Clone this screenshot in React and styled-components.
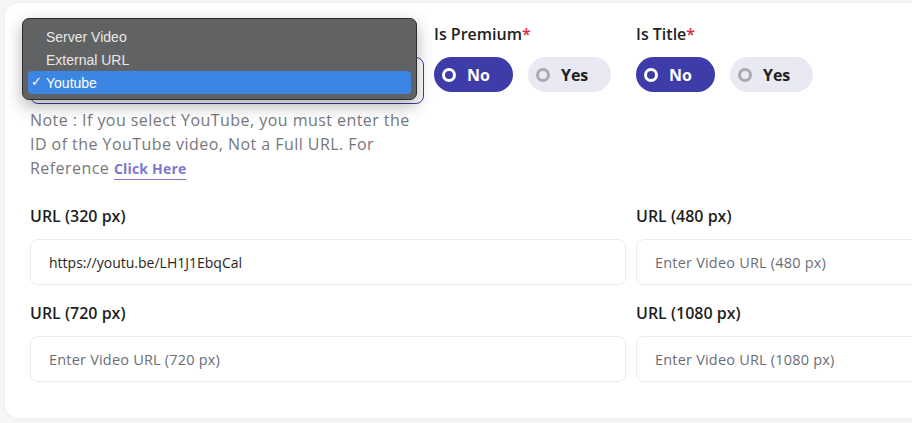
import styled, { createGlobalStyle } from "styled-components"

const GlobalStyle = createGlobalStyle`
  html, body {
    margin: 0;
    padding: 0;
    background: #f6f6f7;
    overflow: hidden;
  }
  body {
    font-family: "Open Sans", "Noto Sans", sans-serif;
  }
`

const Page = styled.div`
  width: 912px;
  height: 423px;
  padding: 3px 0 0 5px;
  box-sizing: border-box;
  overflow: hidden;
`

const Card = styled.div`
  width: 1240px;
  background: #fff;
  border-radius: 14px;
  box-shadow: 0 0 6px rgba(0, 0, 0, 0.05);
  padding: 20px 25px 36px;
  box-sizing: border-box;
`

const Grid = styled.div`
  display: grid;
  grid-template-columns: repeat(6, 192px);
  column-gap: 10px;
  row-gap: ${props => props.rowGap || '0px'};
  margin-top: ${props => props.top || '0px'};
`

const Field = styled.div`
  position: relative;
  display: flex;
  flex-direction: column;
  gap: 12px;
  grid-column: span ${props => props.span || 1};
`

const Label = styled.label`
  min-height: 22px;
  font-size: 16px;
  line-height: 22px;
  font-weight: 600;
  color: #1f1f24;
`

const Star = styled.span`
  color: #e5243b;
`

const SelectBox = styled.div`
  height: 47px;
  border: 1px solid #3d3ca8;
  border-radius: 8px;
  box-sizing: border-box;
  display: flex;
  align-items: center;
  justify-content: flex-end;
  padding-right: 6px;
`

const Caret = styled.span`
  width: 3px;
  height: 3px;
  border-radius: 50%;
  background: #333;
`

const Note = styled.p`
  margin: -8px 0 0;
  font-size: 16px;
  line-height: 24px;
  letter-spacing: 0.45px;
  color: #77777c;
  font-weight: 500;
`

const Link = styled.a`
  display: inline-block;
  line-height: 20px;
  color: #7b78cc;
  font-weight: 700;
  font-size: 14px;
  letter-spacing: 0.2px;
  text-decoration: underline;
  text-underline-offset: 5px;
  text-decoration-thickness: 1px;
`

const Menu = styled.ul`
  position: absolute;
  top: -5px;
  left: -8px;
  width: 395px;
  margin: 0;
  padding: 6px 5px 5px;
  box-sizing: border-box;
  list-style: none;
  background: #616264;
  border: 1px solid #2e2e30;
  border-radius: 7px;
  box-shadow: 0 6px 16px rgba(0, 0, 0, 0.3);
  z-index: 10;
  font-family: "Liberation Sans", "Noto Sans", sans-serif;
`

const MenuItem = styled.li`
  height: 23px;
  display: flex;
  align-items: center;
  padding-left: 18px;
  position: relative;
  border-radius: 4px;
  font-size: 14px;
  color: ${props => props.active ? '#ffffff' : '#e8e8e8'};
  background: ${props => props.active ? '#3b86e2' : 'transparent'};
`

const Check = styled.span`
  position: absolute;
  left: 3px;
  top: 3px;
  font-size: 13px;
`

const Pills = styled.div`
  display: flex;
  gap: 15px;
`

const Pill = styled.div`
  height: 35px;
  padding: 0 23px 0 8px;
  border-radius: 18px;
  display: flex;
  align-items: center;
  gap: 11px;
  font-size: 16px;
  font-weight: 700;
  color: ${props => props.active ? '#fff' : '#1f1f24'};
  background: ${props => props.active ? '#3d3ca8' : '#e9e9f4'};
`

const Ring = styled.span`
  width: 14px;
  height: 14px;
  border-radius: 50%;
  box-sizing: border-box;
  border: 3px solid ${props => props.active ? '#fff' : '#a9a9b0'};
`

const Input = styled.input`
  height: 46px;
  border: 1px solid #ececef;
  border-radius: 8px;
  padding: 0 18px;
  font-family: "Open Sans", "Noto Sans", sans-serif;
  font-size: 14px;
  color: #1f1f24;
  outline: none;
  box-sizing: border-box;
  width: 100%;
  &::placeholder {
    color: #6b6e76;
    font-size: 14.5px;
    letter-spacing: 0.2px;
  }
`

function RadioGroup({ label }) {
  return (
    <Field>
      <Label>{label}<Star>*</Star></Label>
      <Pills>
        <Pill active><Ring active />No</Pill>
        <Pill><Ring />Yes</Pill>
      </Pills>
    </Field>
  )
}

function UrlField({ label, value, placeholder }) {
  return (
    <Field span={3}>
      <Label>{label}</Label>
      <Input defaultValue={value} placeholder={placeholder} />
    </Field>
  )
}

export default function App() {
  return (
    <Page>
      <GlobalStyle />
      <Card>
        <Grid>
          <Field span={2}>
            <Label />
            <SelectBox><Caret /></SelectBox>
            <Menu>
              <MenuItem>Server Video</MenuItem>
              <MenuItem>External URL</MenuItem>
              <MenuItem active><Check>✓</Check>Youtube</MenuItem>
            </Menu>
            <Note>
              Note : If you select YouTube, you must enter the ID of the YouTube video, Not a Full URL. For Reference <Link>Click Here</Link>
            </Note>
          </Field>
          <RadioGroup label="Is Premium" />
          <RadioGroup label="Is Title" />
        </Grid>
        <Grid top="25px" rowGap="17px">
          <UrlField label="URL (320 px)" value="https://youtu.be/LH1J1EbqCal" />
          <UrlField label="URL (480 px)" placeholder="Enter Video URL (480 px)" />
          <UrlField label="URL (720 px)" placeholder="Enter Video URL (720 px)" />
          <UrlField label="URL (1080 px)" placeholder="Enter Video URL (1080 px)" />
        </Grid>
      </Card>
    </Page>
  )
}
